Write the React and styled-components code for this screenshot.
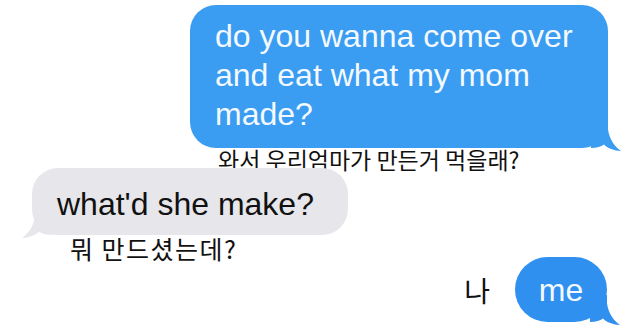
import React from "react";
import styled, { createGlobalStyle } from "styled-components";

const Global = createGlobalStyle`
  html, body { margin: 0; padding: 0; background: #ffffff; }
  body { font-family: "Liberation Sans", Arial, sans-serif; }
`;

const Page = styled.div`
  width: 640px;
  height: 334px;
  overflow: hidden;
  background: #ffffff;
  display: flex;
  flex-direction: column;
  padding-top: 5px;
  box-sizing: border-box;
`;

const Group = styled.div`
  display: flex;
  flex-direction: column;
  align-items: flex-start;
  align-self: ${(p) => (p.$mine ? "flex-end" : "flex-start")};
  margin: ${(p) => p.$margin};
`;

const Bubble = styled.div`
  position: relative;
  box-sizing: border-box;
  font-family: "Liberation Sans", Arial, sans-serif;
  font-size: 32px;
  line-height: 39px;
  background: ${(p) => (p.$mine ? p.$tone || "#3a9df2" : "#e6e6eb")};
  color: ${(p) => (p.$mine ? "#f4f9ff" : "#111111")};
  border-radius: ${(p) => p.$radius || "26px"};
  width: ${(p) => p.$width || "auto"};
  padding: ${(p) => p.$pad};
  text-align: ${(p) => p.$align || "left"};
`;

const Tail = styled.svg`
  position: absolute;
  bottom: -3px;
  width: 30px;
  height: 30px;
  ${(p) => (p.$mine ? "right: -13px;" : "left: -10px; transform: scaleX(-1);")}
`;

const Caption = styled.div`
  font-family: "Noto Sans CJK KR", "Noto Sans", sans-serif;
  font-size: ${(p) => p.$size};
  letter-spacing: ${(p) => p.$spacing || "0"};
  line-height: 24px;
  color: #111111;
  margin: ${(p) => p.$margin};
  white-space: nowrap;
`;

const Row = styled.div`
  display: flex;
  align-items: center;
  justify-content: flex-end;
  gap: 25px;
  padding-right: 33px;
  margin-top: -3px;
`;

const Label = styled.span`
  font-family: "Noto Sans CJK KR", "Noto Sans", sans-serif;
  font-size: 28px;
  color: #111111;
`;

function BubbleTail({ mine, color }) {
  return (
    <Tail $mine={mine} viewBox="0 0 30 30" aria-hidden="true">
      <path
        d="M0 27 C6 27 10 25.5 13 23.5 C17 27.5 23 29.6 30 30 C24 26 18 18 17 8 L17 0 L0 0 Z"
        fill={color}
      />
    </Tail>
  );
}

export default function App() {
  return (
    <>
      <Global />
      <Page>
        <Group $mine $margin="0 32px 0 0">
          <Bubble $mine $width="418px" $pad="12px 20px 14px 25px">
            do you wanna come over and eat what my mom made?
            <BubbleTail mine color="#3a9df2" />
          </Bubble>
          <Caption $size="23px" $margin="-1px 0 0 28px">
            와서 우리엄마가 만든거 먹을래?
          </Caption>
        </Group>

        <Group $margin="-3px 0 0 32px">
          <Bubble $width="316px" $pad="17px 20px 11px 25px">
            what'd she make?
            <BubbleTail color="#e6e6eb" />
          </Bubble>
          <Caption $size="25px" $spacing="1.5px" $margin="1px 0 0 38px">
            뭐 만드셨는데?
          </Caption>
        </Group>

        <Row>
          <Label>나</Label>
          <Bubble
            $mine
            $tone="#3090f0"
            $width="92px"
            $radius="33px"
            $pad="14px 0 12px 0"
            $align="center"
          >
            me
            <BubbleTail mine color="#3090f0" />
          </Bubble>
        </Row>
      </Page>
    </>
  );
}
